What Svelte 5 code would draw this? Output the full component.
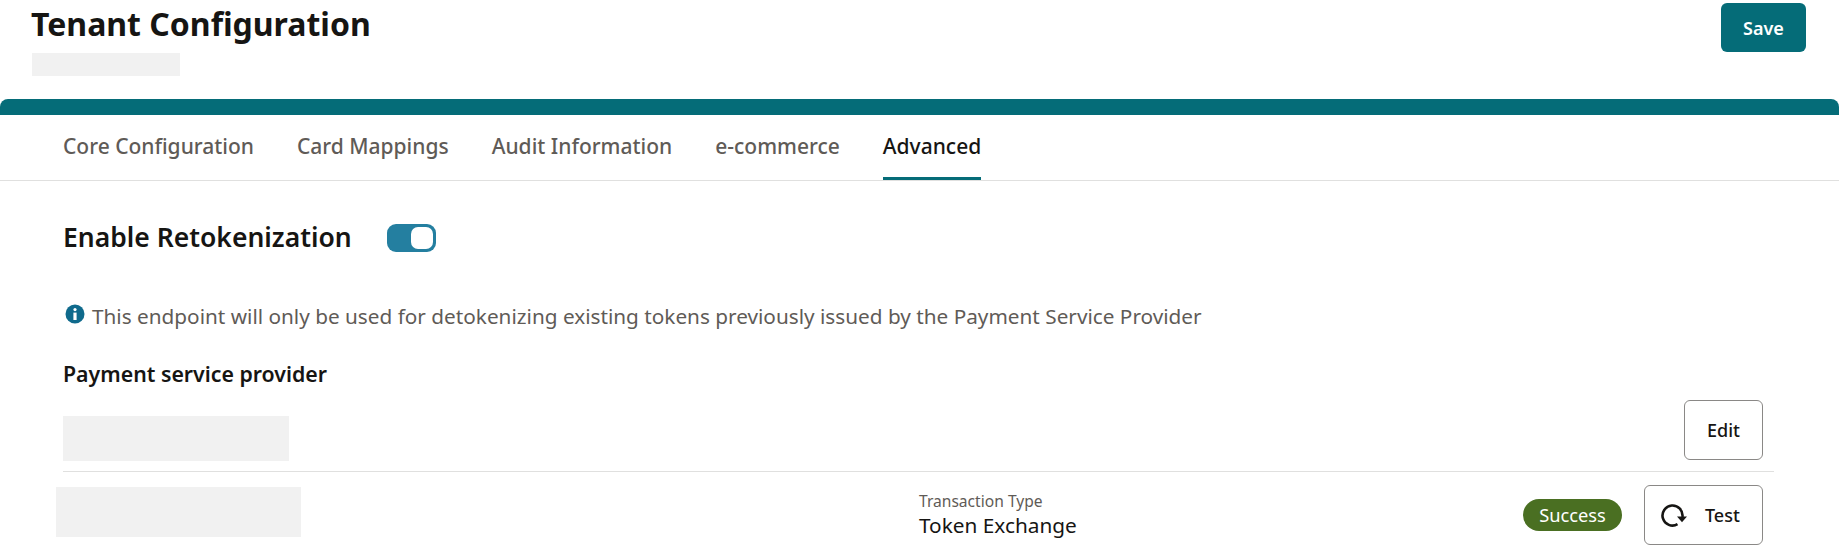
<script>
const tabs = ["Core Configuration", "Card Mappings", "Audit Information", "e-commerce", "Advanced"]
let active = "Advanced"
let enabled = true
</script>

<div class="page">
    <header class="top">
        <div>
            <h1>Tenant Configuration</h1>
            <div class="blank sub"></div>
        </div>
        <button class="btn primary">Save</button>
    </header>

    <div class="band"></div>

    <nav class="tabs">
        {#each tabs as tab}
            <span class="tab" class:active={tab === active}>{tab}</span>
        {/each}
    </nav>

    <section class="content">
        <div class="toggle-row">
            <h2>Enable Retokenization</h2>
            <button class="switch" class:on={enabled} aria-label="Enable Retokenization" onclick={() => enabled = !enabled}>
                <span class="knob"></span>
            </button>
        </div>

        <p class="note">
            <svg class="info" viewBox="0 0 20 20" aria-hidden="true">
                <circle cx="10" cy="10" r="9.5" fill="#0f6a8c" />
                <circle cx="10" cy="5.6" r="1.6" fill="#fff" />
                <path d="M8.4 8.6h3.2v7.4H8.4z" fill="#fff" />
            </svg>
            This endpoint will only be used for detokenizing existing tokens previously issued by the Payment Service Provider
        </p>

        <h3>Payment service provider</h3>

        <div class="provider">
            <div class="blank provider-name"></div>
            <button class="btn outline edit">Edit</button>
        </div>

        <div class="endpoint">
            <div class="blank endpoint-name"></div>
            <div class="type">
                <span class="type-label">Transaction Type</span>
                <span class="type-value">Token Exchange</span>
            </div>
            <span class="badge">Success</span>
            <button class="btn outline test">
                <svg class="refresh" viewBox="0 0 26 23" aria-hidden="true">
                    <path d="M21.4 13A10 10 0 1 0 16.5 20.2" fill="none" stroke="#161513" stroke-width="2.6" />
                    <path d="M16 12.6H26L21 18.3z" fill="#161513" />
                </svg>
                Test
            </button>
        </div>
    </section>
</div>

<style>
:global(body) {
    background: #fff;
    font-family: "Noto Sans", sans-serif;
    color: #161513;
}
.page {
    height: 548px;
    overflow: hidden;
}
.top {
    display: flex;
    justify-content: space-between;
    align-items: flex-start;
    height: 99px;
    padding: 3px 33px 0 32px;
    box-sizing: border-box;
}
h1 {
    margin: 0 0 0 -1px;
    font-size: 32px;
    line-height: 42px;
    font-weight: 700;
}
.blank {
    background: #f1f1f1;
}
.sub {
    width: 148px;
    height: 23px;
    margin-top: 8px;
}
.btn {
    font: inherit;
    border-radius: 6px;
    cursor: pointer;
}
.primary {
    width: 85px;
    height: 49px;
    background: #056c78;
    color: #fff;
    border: none;
    font-size: 18px;
    font-weight: 600;
}
.outline {
    background: #fff;
    border: 1px solid #8a8886;
    color: #161513;
    height: 60px;
    font-size: 18px;
    font-weight: 500;
}
.band {
    height: 16px;
    background: #056c78;
    border-radius: 8px 8px 0 0;
}
.tabs {
    display: flex;
    gap: 43px;
    height: 65px;
    padding-left: 63px;
    border-bottom: 1px solid #e0e0df;
}
.tab {
    font-size: 21px;
    font-weight: 500;
    color: #5f5b57;
    line-height: 62px;
    height: 65px;
    box-sizing: border-box;
}
.tab.active {
    color: #161513;
    border-bottom: 3px solid #056c78;
}
.content {
    padding: 0 65px 0 64px;
}
.toggle-row {
    display: flex;
    align-items: center;
    gap: 35px;
    margin-top: 41px;
}
h2 {
    margin: 0 0 2px -1px;
    font-size: 26.5px;
    font-weight: 600;
    line-height: 30px;
}
.switch {
    width: 49px;
    height: 28px;
    padding: 3px;
    border: none;
    border-radius: 9px;
    background: #247fa0;
    display: flex;
    justify-content: flex-end;
    cursor: pointer;
}
.knob {
    width: 22px;
    height: 22px;
    border-radius: 7px;
    background: #fff;
}
.note {
    display: flex;
    align-items: center;
    gap: 7px;
    margin: 48px 0 0;
    font-size: 20.75px;
    line-height: 28px;
    color: #5f5b57;
}
.info {
    width: 20px;
    height: 20px;
    margin: -5px 0 0 1px;
}
h3 {
    margin: 30px 0 0 -1px;
    font-size: 21.3px;
    line-height: 28px;
    font-weight: 600;
}
.provider {
    display: flex;
    justify-content: space-between;
    align-items: flex-start;
    margin: 12px 0 0 -1px;
    padding: 0 11px 10px 0;
    border-bottom: 1px solid #e0e0df;
}
.provider-name {
    width: 226px;
    height: 45px;
    margin-top: 16px;
}
.edit {
    width: 79px;
}
.endpoint {
    display: flex;
    align-items: center;
    margin: 13px 11px 0 -8px;
}
.endpoint-name {
    width: 245px;
    height: 50px;
    margin-bottom: 6px;
}
.type {
    display: flex;
    flex-direction: column;
    margin-left: 618px;
}
.type-label {
    font-size: 15.6px;
    line-height: 20px;
    color: #5f5b57;
}
.type-value {
    font-size: 20.8px;
    line-height: 28px;
}
.badge {
    margin-left: auto;
    width: 99px;
    height: 32px;
    line-height: 32px;
    text-align: center;
    border-radius: 16px;
    background: #4a6f22;
    color: #fff;
    font-size: 18.3px;
}
.test {
    display: flex;
    align-items: center;
    gap: 18px;
    width: 119px;
    margin-left: 22px;
    padding: 0 0 0 16px;
}
.refresh {
    width: 26px;
    height: 23px;
}
</style>
